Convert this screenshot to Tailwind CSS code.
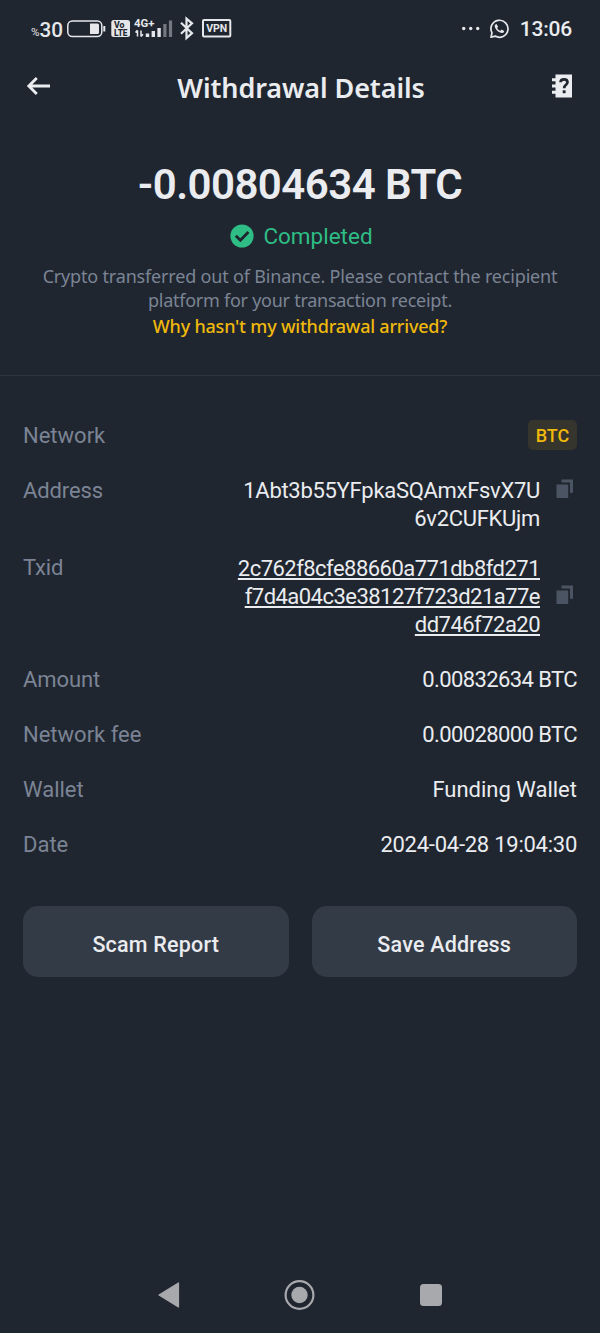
<!DOCTYPE html>
<html lang="en">
<head>
<meta charset="utf-8">
<title>Withdrawal Details</title>
<script src="https://cdn.jsdelivr.net/npm/@tailwindcss/browser@4"></script>
</head>
<body class="bg-[#202630]">
<div class="flex h-[1333px] w-[600px] flex-col overflow-hidden bg-[#202630] font-[Roboto,sans-serif] text-[#eaecef]">

  <!-- Status bar -->
  <div class="flex h-[58px] items-center justify-between pr-7 pl-[31px]">
    <svg width="202" height="30" viewBox="31 14 202 30" fill="none" font-family="Roboto, sans-serif" class="text-[#e6e7ea]">
      <text x="31" y="36" font-size="11" fill="currentColor" textLength="8.5" lengthAdjust="spacingAndGlyphs">%</text>
      <text x="39.500" y="36.500" font-size="21" font-weight="500" fill="currentColor" textLength="23.500" lengthAdjust="spacingAndGlyphs">30</text>
      <rect x="67.800" y="21" width="34" height="15.500" rx="4.500" stroke="currentColor" stroke-width="1.500"/>
      <path d="M90 23.500h7.500q1.500 0 1.500 1.500v7.500q0 1.500-1.500 1.500H90z" fill="currentColor"/>
      <path d="M104.300 26v5.500" stroke="currentColor" stroke-width="2"/>
      <rect x="111.300" y="20" width="18.700" height="17" rx="2.500" fill="currentColor"/>
      <text x="114" y="28" font-size="8.500" font-weight="800" fill="#202630" textLength="10.500" lengthAdjust="spacingAndGlyphs">Vo</text>
      <text x="114" y="35.600" font-size="8.500" font-weight="800" fill="#202630" textLength="13.500" lengthAdjust="spacingAndGlyphs">LTE</text>
      <text x="134" y="27.300" font-size="11" font-weight="700" fill="currentColor" textLength="20.500" lengthAdjust="spacingAndGlyphs">4G+</text>
      <path d="M137.500 36.500v-6M135.500 32.500l2-2.300M141 30.500v6M143 34.200l-2 2.300" stroke="currentColor" stroke-width="1.500"/>
      <path d="M147.500 37v-3.500M153.300 37v-6M159.100 37V28" stroke="currentColor" stroke-width="3.400"/>
      <path d="M164.900 37V24M170.500 37V20.500" stroke="#747981" stroke-width="3.200"/>
      <path d="M181 22.800l11 10.400-5.500 4.800V18.600l5.500 4.800L181 33.800" stroke="currentColor" stroke-width="2.200"/>
      <rect x="203" y="20" width="27.300" height="16.600" rx="1" stroke="currentColor" stroke-width="2"/>
      <text x="206.200" y="32.200" font-size="10.500" font-weight="700" fill="currentColor" textLength="21" lengthAdjust="spacingAndGlyphs">VPN</text>
    </svg>
    <div class="flex items-center gap-[9px]">
      <svg width="20" height="20" viewBox="0 0 20 20" fill="#e6e7ea"><circle cx="3.700" cy="9.500" r="1.700"/><circle cx="10.700" cy="9.500" r="1.700"/><circle cx="17.700" cy="9.500" r="1.700"/></svg>
      <svg width="20" height="20" viewBox="0 0 20 20" fill="none" class="mr-0.5"><path d="M2 18.200l1-4.400a8.500 8.500 0 1 1 3.200 3.300z" stroke="#e6e7ea" stroke-width="1.700" stroke-linejoin="round"/><path d="M7.500 4.900c-.6-.2-1.900.9-1.800 2.200.3 3.500 4.400 7 7.500 6.900 1.100 0 2.100-1 1.900-2l-2.600-1.400-1.300 1.300c-1.500-.6-2.500-1.600-3-2.900l.9-1.200z" fill="#e6e7ea"/></svg>
      <span class="text-[21px] leading-6 font-medium tracking-[-0.2px]">13:06</span>
    </div>
  </div>

  <!-- Title bar -->
  <header class="flex h-[60px] items-center justify-between pr-[27px] pl-[26px]">
    <svg width="25" height="20" viewBox="0 0 25 20" fill="none" stroke="#eaecef" stroke-width="2.800" class="-mt-1"><path d="M2.500 10H24M10.800 2L2.800 10l8 8"/></svg>
    <h1 class="font-[Noto_Sans,sans-serif] text-[27px] leading-8 font-semibold tracking-[-0.1px]">Withdrawal Details</h1>
    <svg width="22" height="24" viewBox="0 0 22 24" class="-mt-1"><path d="M4.500.5H21v23H4.500v-3.700H1v-3h3.500v-3.300H1v-3h3.500V7.200H1v-3h3.500z" fill="#eaecef"/><path d="M9.500 8.300c.1-4 7-4 7 0 0 2.700-3.400 2.400-3.400 6" fill="none" stroke="#202630" stroke-width="2.700"/><path d="M11.700 16.300h2.900v2.900h-2.900z" fill="#202630"/></svg>
  </header>

  <!-- Amount and status -->
  <section class="flex h-[258px] flex-col items-center border-b border-[#2d343e] pt-[42px]">
    <div class="text-[42px] leading-[50px] font-semibold tracking-[-0.550px] whitespace-nowrap">-0.00804634 BTC</div>
    <div class="mt-3 flex items-center gap-[9px] pl-[3px] text-[#2ebd85]">
      <svg width="24" height="24" viewBox="0 0 24 24"><circle cx="12" cy="12" r="11.600" fill="#2ebd85"/><path d="M5.800 11.700l4.600 4.600 8-8.200" fill="none" stroke="#202630" stroke-width="2.900"/></svg>
      <span class="text-[22.500px] leading-7">Completed</span>
    </div>
    <p class="mt-3.5 text-center font-[Noto_Sans,sans-serif] text-[18px] leading-6 tracking-[-0.18px] whitespace-nowrap text-[#7b8494]">Crypto transferred out of Binance. Please contact the recipient<br><span class="tracking-[-0.26px]">platform for your transaction receipt.</span></p>
    <a class="mt-0.5 font-[Noto_Sans,sans-serif] text-[18px] leading-6 font-medium tracking-[-0.2px] text-[#f0b90b]">Why hasn't my withdrawal arrived?</a>
  </section>

  <!-- Details -->
  <dl class="flex flex-col px-[23px] pt-[46px] text-[22px] leading-7">
    <div class="flex h-[28px] items-center justify-between"><dt class="text-[#7b8494]">Network</dt><dd class="-mt-0.5 flex h-[30px] w-[49px] items-center justify-center rounded-[5px] bg-[#36352d] pt-0.5 text-[18px] font-medium text-[#f0b90b]">BTC</dd></div>
    <div class="mt-[27px] flex justify-between"><dt class="tracking-[-0.1px] text-[#7b8494]">Address</dt>
      <dd class="flex h-[57px]"><span class="text-right leading-[28px] tracking-[-0.3px]">1Abt3b55YFpkaSQAmxFsvX7U<br>6v2CUFKUjm</span>
        <svg width="18" height="20" viewBox="0 0 18 20" class="mt-[2px] mr-[3px] ml-[16px]"><path d="M.5 5.500h11.700V19H.5z" fill="#4b5462"/><path d="M5.500.5H17v13.300h-3V3.500H5.500z" fill="#4b5462"/></svg></dd></div>
    <div class="mt-[20px] flex justify-between"><dt class="tracking-[-0.2px] text-[#7b8494]">Txid</dt>
      <dd class="flex h-[86px] items-center"><span class="text-right leading-[28.300px] tracking-[-0.53px] underline decoration-[1.500px] underline-offset-[2px]">2c762f8cfe88660a771db8fd271<br>f7d4a04c3e38127f723d21a77e<br>dd746f72a20</span>
        <svg width="18" height="20" viewBox="0 0 18 20" class="-mt-1 mr-[3px] ml-[16px]"><path d="M.5 5.500h11.700V19H.5z" fill="#4b5462"/><path d="M5.500.5H17v13.300h-3V3.500H5.500z" fill="#4b5462"/></svg></dd></div>
    <div class="mt-[26px] flex justify-between"><dt class="tracking-[-0.1px] text-[#7b8494]">Amount</dt><dd class="tracking-[-0.6px]">0.00832634 BTC</dd></div>
    <div class="mt-[27px] flex justify-between"><dt class="text-[#7b8494]">Network fee</dt><dd class="tracking-[-0.6px]">0.00028000 BTC</dd></div>
    <div class="mt-[27px] flex justify-between"><dt class="text-[#7b8494]">Wallet</dt><dd>Funding Wallet</dd></div>
    <div class="mt-[27px] flex justify-between"><dt class="text-[#7b8494]">Date</dt><dd class="tracking-[-0.25px]">2024-04-28 19:04:30</dd></div>
  </dl>

  <!-- Actions -->
  <div class="mt-[47px] grid grid-cols-2 gap-[23px] px-[23px]">
    <button class="h-[71px] rounded-[15px] bg-[#333b47] pt-2 text-[21.500px] font-medium tracking-[0.2px]">Scam Report</button>
    <button class="h-[71px] rounded-[15px] bg-[#333b47] pt-2 text-[21.500px] font-medium tracking-[0.2px]">Save Address</button>
  </div>

  <!-- System navigation -->
  <nav class="mt-auto flex h-[76px] items-center justify-between pr-[157px] pl-[157px]">
    <svg width="24" height="28" viewBox="0 0 24 28"><path d="M2 14L21.500 2v24z" fill="#a8a9ac" stroke="#a8a9ac" stroke-width="1.200" stroke-linejoin="round"/></svg>
    <svg width="32" height="32" viewBox="0 0 32 32"><circle cx="15.500" cy="16" r="13.900" fill="none" stroke="#a8a9ac" stroke-width="2.200"/><circle cx="15.500" cy="16" r="8.200" fill="#a8a9ac"/></svg>
    <svg width="24" height="24" viewBox="0 0 24 24"><rect x="1" y="1" width="22" height="22" rx="3.500" fill="#a8a9ac"/></svg>
  </nav>
</div>
</body>
</html>
